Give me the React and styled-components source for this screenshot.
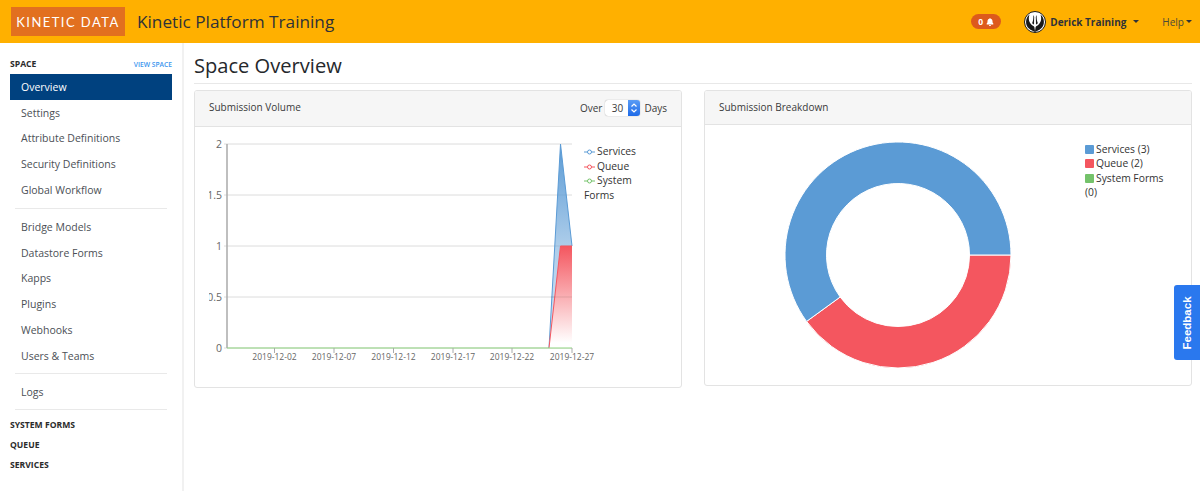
import React from "react";
import styled, { createGlobalStyle } from "styled-components";
import { FaBell } from "react-icons/fa";

const GlobalStyle = createGlobalStyle`
  html, body {
    margin: 0;
    padding: 0;
    background: #fff;
    font-family: "Open Sans", sans-serif;
    color: #333;
    overflow: hidden;
  }
  * { box-sizing: border-box; }
`;

const Page = styled.div`
  width: 1200px;
  height: 491px;
  position: relative;
  overflow: hidden;
`;

const Header = styled.header`
  height: 43px;
  background: #ffb000;
  display: flex;
  align-items: center;
  padding: 0 0 0 11px;
`;

const Logo = styled.div`
  width: 114px;
  height: 29px;
  background: #e2701f;
  color: #fff;
  display: flex;
  align-items: center;
  justify-content: center;
  font-family: "Lato", sans-serif;
  font-size: 13px;
  letter-spacing: 1.45px;
  white-space: nowrap;
`;

const Brand = styled.div`
  margin-left: 12px;
  font-size: 17.2px;
  color: #2f3238;
  flex: 1;
`;

const Badge = styled.div`
  width: 30px;
  height: 15px;
  border-radius: 8px;
  background: #dd5a1c;
  color: #fff;
  font-size: 8.5px;
  font-weight: 700;
  display: flex;
  align-items: center;
  justify-content: center;
  gap: 3px;
  margin-right: 23px;
`;

const Avatar = styled.svg`
  width: 22px;
  height: 22px;
  margin-right: 4px;
`;

const UserName = styled.div`
  font-size: 10px;
  font-weight: 700;
  color: #2f3238;
  margin-right: 7px;
`;

const Caret = styled.span`
  display: inline-block;
  width: 0;
  height: 0;
  border-left: 3.5px solid transparent;
  border-right: 3.5px solid transparent;
  border-top: 3.5px solid #2f3238;
`;

const HelpLink = styled.div`
  display: flex;
  align-items: center;
  gap: 2px;
  font-size: 10px;
  color: #4a4a3a;
  margin: 0 8px 0 23px;
`;

const Body = styled.div`
  display: flex;
  height: 448px;
`;

const Sidebar = styled.aside`
  width: 184px;
  flex: none;
  border-right: 2px solid #f1f1f1;
  padding: 14px 10px 0;
`;

const SideHead = styled.div`
  display: flex;
  justify-content: space-between;
  align-items: center;
  height: 14px;
  margin-bottom: 3px;
`;

const SectionTitle = styled.div`
  font-size: 8.6px;
  font-weight: 700;
  color: #2b2b2b;
  text-transform: uppercase;
  line-height: 20px;
  height: 20px;
`;

const ViewLink = styled.div`
  font-size: 6.7px;
  font-weight: 600;
  color: #3a94ee;
  text-transform: uppercase;
`;

const NavItem = styled.div`
  height: 25.8px;
  display: flex;
  align-items: center;
  padding-left: 11px;
  font-size: 10.5px;
  color: ${(p) => (p.$active ? "#fff" : "#4b4f56")};
  background: ${(p) => (p.$active ? "#00417f" : "transparent")};
`;

const Divider = styled.hr`
  border: 0;
  border-top: 1px solid #e9e9e9;
  margin: ${(p) => p.$space || 5}px 5px;
`;

const Main = styled.main`
  flex: 1;
  padding: 0 8px 0 10px;
`;

const PageTitle = styled.h1`
  margin: 0 0 6px;
  height: 41px;
  padding-top: 8px;
  font-size: 20.1px;
  font-weight: 400;
  line-height: 30px;
  color: #25282c;
  border-bottom: 1px solid #e8e8e8;
`;

const Cards = styled.div`
  display: grid;
  grid-template-columns: 488px 488px;
  gap: 22px;
  align-items: start;
`;

const Card = styled.section`
  border: 1px solid #e3e3e3;
  border-radius: 3px;
  height: ${(p) => p.$height}px;
  overflow: hidden;
`;

const CardHeader = styled.div`
  height: ${(p) => p.$height}px;
  background: #f6f6f6;
  border-bottom: 1px solid #e3e3e3;
  display: flex;
  align-items: center;
  justify-content: space-between;
  padding: 0 14px ${(p) => p.$height - 32}px;
  font-size: 10px;
  color: #3a3a3a;
`;

const RangeForm = styled.div`
  display: flex;
  align-items: center;
  gap: 3px;
  font-size: 10px;
  padding-top: 3px;
`;

const Select = styled.div`
  width: 35px;
  height: 16px;
  background: #fff;
  border-radius: 3px;
  box-shadow: 0 0 1px rgba(0, 0, 0, 0.45);
  display: flex;
  align-items: center;
  overflow: hidden;
  margin-right: 1px;
`;

const SelectValue = styled.span`
  flex: 1;
  text-align: center;
  font-size: 10px;
  padding-left: 1px;
`;

const SelectArrows = styled.svg`
  width: 12px;
  height: 16px;
  flex: none;
`;

const VolumeBody = styled.div`
  display: flex;
  padding-left: 14px;
`;

const LineChart = styled.svg`
  width: 400px;
  height: 250px;
  flex: none;
  margin: 8px -25px 0 0;
`;

const ChartLabel = styled.text`
  font-family: "Open Sans", sans-serif;
  font-size: ${(p) => p.$size}px;
  fill: #666;
`;

const Legend = styled.div`
  width: 70px;
  font-size: 10.3px;
  line-height: 14.5px;
  color: #333;
  margin-top: 17px;
`;

const LegendMark = styled.svg`
  width: 11px;
  height: 6px;
  margin-right: 2px;
`;

const BreakdownBody = styled.div`
  display: flex;
  padding: 11px 0 0 74px;
`;

const Donut = styled.svg`
  width: 238px;
  height: 238px;
  flex: none;
`;

const PieLegend = styled.div`
  width: 90px;
  margin: 6px 0 0 68px;
  font-size: 10.3px;
  line-height: 14.4px;
`;

const Swatch = styled.span`
  display: inline-block;
  width: 9px;
  height: 9px;
  border-radius: 1px;
  background: ${(p) => p.$color};
  margin-right: 2px;
  vertical-align: -1px;
`;

const FeedbackTab = styled.div`
  position: absolute;
  right: 0;
  top: 285px;
  width: 26px;
  height: 75px;
  background: #2a78ee;
  border-radius: 3px 0 0 3px;
  color: #fff;
  display: flex;
  align-items: center;
  justify-content: center;
`;

const FeedbackText = styled.span`
  transform: rotate(-90deg);
  font-family: "Liberation Sans", sans-serif;
  font-size: 11.5px;
  font-weight: 700;
`;

const topNav = ["Overview", "Settings", "Attribute Definitions", "Security Definitions", "Global Workflow"];
const midNav = ["Bridge Models", "Datastore Forms", "Kapps", "Plugins", "Webhooks", "Users & Teams"];
const bottomSections = ["System Forms", "Queue", "Services"];

const SERIES = { services: "#5b9bd5", queue: "#f4565f", system: "#74c26a" };
const xTicks = [
  [65.5, "2019-12-02"],
  [125, "2019-12-07"],
  [184.5, "2019-12-12"],
  [244, "2019-12-17"],
  [303, "2019-12-22"],
  [363, "2019-12-27"],
];
const yTicks = [
  [9, "2"],
  [60, "1.5"],
  [111, "1"],
  [162, "0.5"],
  [213, "0"],
];

const VolumeChart = () => (
  <LineChart viewBox="0 0 400 250">
    <defs>
      <linearGradient id="blueFill" x1="0" y1="0" x2="0" y2="1">
        <stop offset="0" stopColor="#5b9bd5" />
        <stop offset="0.5" stopColor="#5b9bd5" stopOpacity="0.5" />
        <stop offset="1" stopColor="#5b9bd5" stopOpacity="0.25" />
      </linearGradient>
      <linearGradient id="redFill" x1="0" y1="0" x2="0" y2="1">
        <stop offset="0" stopColor="#f4565f" />
        <stop offset="0.95" stopColor="#ffffff" />
      </linearGradient>
    </defs>
    {yTicks.map(([y, label]) => (
      <g key={label}>
        <line x1="15" x2="363" y1={y} y2={y} stroke="#dcdcdc" />
        <ChartLabel x="13" y={y + 4} textAnchor="end" $size={10.5}>
          {label}
        </ChartLabel>
      </g>
    ))}
    <line x1="18" x2="18" y1="9" y2="213" stroke="#aaa" strokeWidth="1.5" />
    <polygon points="340,213 351.5,9 363,111 363,213 340,213" fill="url(#blueFill)" />
    <polyline points="340,213 351.5,9 363,111" fill="none" stroke="#5b9bd5" />
    <polygon points="340,213 351.5,111 363,111 363,213" fill="url(#redFill)" />
    <polyline points="340,213 351.5,111 363,111" fill="none" stroke="#f4565f" />
    <line x1="342" x2="363" y1="162" y2="162" stroke="#000" strokeOpacity="0.1" />
    <line x1="18" x2="363" y1="213" y2="213" stroke="#8ed47e" strokeWidth="1.2" />
    {xTicks.map(([x, label]) => (
      <g key={label}>
        <line x1={x} x2={x} y1="213" y2="218" stroke="#aaa" />
        <ChartLabel x={x} y="224.5" textAnchor="middle" $size={8.5}>
          {label}
        </ChartLabel>
      </g>
    ))}
  </LineChart>
);

const Mark = ({ color }) => (
  <LegendMark viewBox="0 0 11 6">
    <line x1="0" x2="11" y1="3" y2="3" stroke={color} />
    <circle cx="5.5" cy="3" r="2" fill="#fff" stroke={color} />
  </LegendMark>
);

// ring runs clockwise from 3 o'clock: queue first, then services
const arc = (from, to) => {
  const cx = 119;
  const cy = 119;
  const R = 113;
  const r = 71.5;
  const pt = (rad, deg) => {
    const a = (deg * Math.PI) / 180;
    return `${(cx + rad * Math.cos(a)).toFixed(2)} ${(cy + rad * Math.sin(a)).toFixed(2)}`;
  };
  const large = to - from > 180 ? 1 : 0;
  return `M${pt(R, from)} A${R} ${R} 0 ${large} 1 ${pt(R, to)} L${pt(r, to)} A${r} ${r} 0 ${large} 0 ${pt(r, from)} Z`;
};

const App = () => (
  <Page>
    <GlobalStyle />
    <Header>
      <Logo>KINETIC DATA</Logo>
      <Brand>Kinetic Platform Training</Brand>
      <Badge>
        0 <FaBell size={8} />
      </Badge>
      <Avatar viewBox="0 0 22 22">
        <circle cx="11" cy="11" r="10.5" fill="#fff" stroke="#1a1a1a" />
        <path d="M5.5 3.5 C1 7 1 14.5 5 17.5 C7 19.3 9 19.8 11 21 C13 19.8 15 19.3 17 17.5 C21 14.5 21 7 16.5 3.5 C18 8 17 12 13.5 14.5 L11 16 L8.5 14.5 C5 12 4 8 5.5 3.5 Z" fill="#1a1a1a" />
        <path d="M9.3 4 C9.5 7 9.2 10 8 12.5 C9 12.5 9.6 13 10 14 L10.3 6 Z M12.7 4 C12.5 7 12.8 10 14 12.5 C13 12.5 12.4 13 12 14 L11.7 6 Z" fill="#1a1a1a" />
        <path d="M11 1 L11.8 15 L11 20 L10.2 15 Z" fill="#fff" />
      </Avatar>
      <UserName>Derick Training</UserName>
      <Caret />
      <HelpLink>
        Help <Caret />
      </HelpLink>
    </Header>
    <Body>
      <Sidebar>
        <SideHead>
          <SectionTitle>Space</SectionTitle>
          <ViewLink>View Space</ViewLink>
        </SideHead>
        {topNav.map((item, i) => (
          <NavItem key={item} $active={i === 0}>
            {item}
          </NavItem>
        ))}
        <Divider />
        {midNav.map((item) => (
          <NavItem key={item}>{item}</NavItem>
        ))}
        <Divider $space={4.5} />
        <NavItem>Logs</NavItem>
        <Divider $space={4.5} />
        {bottomSections.map((item) => (
          <SectionTitle key={item}>{item}</SectionTitle>
        ))}
      </Sidebar>
      <Main>
        <PageTitle>Space Overview</PageTitle>
        <Cards>
          <Card $height={298}>
            <CardHeader $height={36}>
              <span>Submission Volume</span>
              <RangeForm>
                Over
                <Select>
                  <SelectValue>30</SelectValue>
                  <SelectArrows viewBox="0 0 12 16">
                    <defs>
                      <linearGradient id="selectBlue" x1="0" y1="0" x2="0" y2="1">
                        <stop offset="0" stopColor="#5a9cf5" />
                        <stop offset="1" stopColor="#1f6be8" />
                      </linearGradient>
                    </defs>
                    <rect width="12" height="16" fill="url(#selectBlue)" />
                    <path d="M3.5 6.5 L6 4 L8.5 6.5 M3.5 9.5 L6 12 L8.5 9.5" fill="none" stroke="#fff" strokeWidth="1.2" />
                  </SelectArrows>
                </Select>
                Days
              </RangeForm>
            </CardHeader>
            <VolumeBody>
              <VolumeChart />
              <Legend>
                <div>
                  <Mark color={SERIES.services} />
                  Services
                </div>
                <div>
                  <Mark color={SERIES.queue} />
                  Queue
                </div>
                <div>
                  <Mark color={SERIES.system} />
                  System Forms
                </div>
              </Legend>
            </VolumeBody>
          </Card>
          <Card $height={296}>
            <CardHeader $height={34}>
              <span>Submission Breakdown</span>
            </CardHeader>
            <BreakdownBody>
              <Donut viewBox="0 0 238 238">
                <path d={arc(0, 144)} fill={SERIES.queue} stroke="#fff" />
                <path d={arc(144, 360)} fill={SERIES.services} stroke="#fff" />
              </Donut>
              <PieLegend>
                <div>
                  <Swatch $color={SERIES.services} />
                  Services (3)
                </div>
                <div>
                  <Swatch $color={SERIES.queue} />
                  Queue (2)
                </div>
                <div>
                  <Swatch $color={SERIES.system} />
                  System Forms (0)
                </div>
              </PieLegend>
            </BreakdownBody>
          </Card>
        </Cards>
      </Main>
    </Body>
    <FeedbackTab>
      <FeedbackText>Feedback</FeedbackText>
    </FeedbackTab>
  </Page>
);

export default App;
